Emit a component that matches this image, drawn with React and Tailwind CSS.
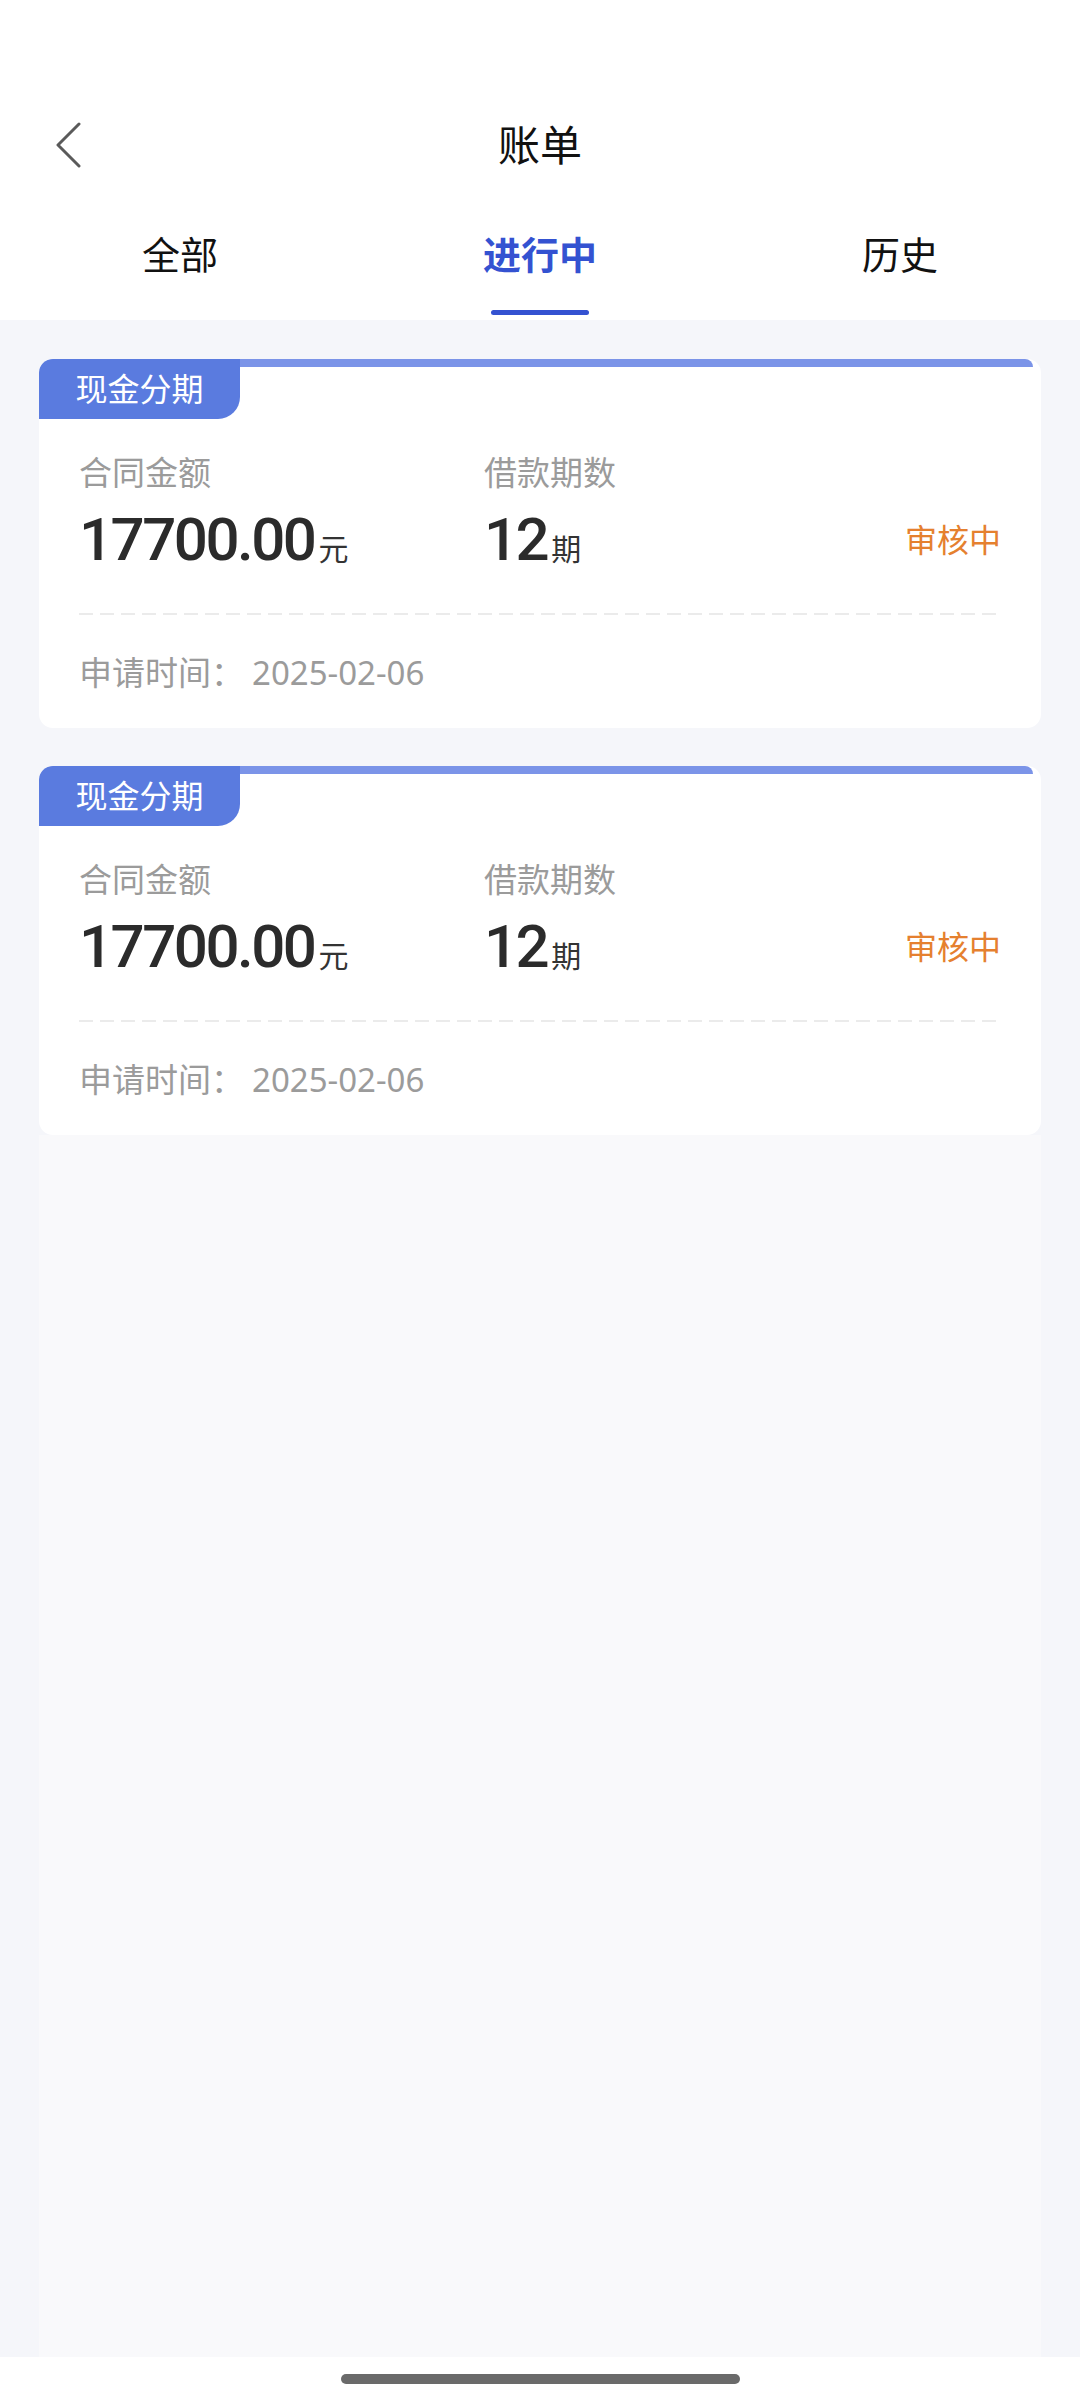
import React from 'react';

const cjk = { fontFamily: '"Noto Sans", "Noto Sans CJK SC", sans-serif' };
const num = { fontFamily: 'Roboto, "Noto Sans CJK SC", sans-serif' };

const bills = [
    { type: '现金分期', amount: '17700.00', term: '12', status: '审核中', date: '2025-02-06' },
    { type: '现金分期', amount: '17700.00', term: '12', status: '审核中', date: '2025-02-06' },
];

function BillCard({ bill }) {
    return (
        <div className="flex flex-col bg-white rounded-[14px] overflow-hidden">
            <div className="flex items-start h-[60px]">
                <div className="flex items-center justify-center w-[201px] h-[60px] bg-[#5a7bdf] rounded-tl-[12px] rounded-br-[22px] text-white text-[32px] leading-none">
                    {bill.type}
                </div>
                <div className="flex-1 h-[8px] mr-[8px] bg-[#7b94e8] rounded-tr-[10px]" />
            </div>
            <div className="px-[40px] pt-[32px] pb-[33px]">
                <div className="flex">
                    <div className="w-[405px] flex flex-col">
                        <span className="text-[33px] leading-[44px] text-[#9b9b9b]">合同金额</span>
                        <div className="flex items-baseline mt-[13px] h-[64px]">
                            <span style={num} className="text-[60px] leading-[64px] font-medium text-[#2b2b2b] tracking-[-2.5px]">
                                {bill.amount}
                            </span>
                            <span className="text-[30px] text-[#333] ml-[4px]">元</span>
                        </div>
                    </div>
                    <div className="flex-1 flex flex-col">
                        <span className="text-[33px] leading-[44px] text-[#9b9b9b]">借款期数</span>
                        <div className="flex items-center justify-between mt-[13px] h-[64px]">
                            <div className="flex items-baseline">
                                <span style={num} className="text-[60px] leading-[64px] font-medium text-[#2b2b2b] tracking-[-2.5px]">
                                    {bill.term}
                                </span>
                                <span className="text-[30px] text-[#333] ml-[4px]">期</span>
                            </div>
                            <span className="text-[32px] text-[#e5802f]">{bill.status}</span>
                        </div>
                    </div>
                </div>
                <div className="mt-[41px] h-[2px] bg-[repeating-linear-gradient(to_right,#ebebeb_0_14px,transparent_14px_21px)]" />
                <div className="flex items-center mt-[36px] h-[44px] text-[33px] text-[#9b9b9b]">
                    <span>申请时间：</span>
                    <span className="ml-[8px]">{bill.date}</span>
                </div>
            </div>
        </div>
    );
}

export default function App() {
    const tabs = ['全部', '进行中', '历史'];
    const active = 1;

    return (
        <div style={cjk} className="w-[1080px] h-[2400px] flex flex-col bg-white">
            <div className="h-[100px]" />
            <div className="grid grid-cols-[1fr_auto_1fr] items-center h-[90px]">
                <div className="pl-[55px]">
                    <svg width="27" height="46" viewBox="0 0 27 46" fill="none">
                        <path d="M24 2 L3 23 L24 44" stroke="#5a5a5a" strokeWidth="3" strokeLinecap="round" strokeLinejoin="round" />
                    </svg>
                </div>
                <h1 className="text-[42px] leading-none text-[#111]">账单</h1>
                <div />
            </div>
            <div className="grid grid-cols-3 h-[130px]">
                {tabs.map((t, i) => (
                    <div key={t} className="flex flex-col items-center pt-[42px]">
                        <span
                            className={
                                i === active
                                    ? 'text-[38px] leading-[44px] font-semibold text-[#3452d1]'
                                    : 'text-[38px] leading-[44px] text-[#111]'
                            }
                        >
                            {t}
                        </span>
                        {i === active && <div className="mt-[34px] w-[98px] h-[5px] rounded-full bg-[#3452d1]" />}
                    </div>
                ))}
            </div>
            <div className="flex-1 flex flex-col px-[39px] pt-[39px] bg-[#f5f6fa]">
                <div className="flex flex-col gap-[38px]">
                    {bills.map((b, i) => (
                        <BillCard key={i} bill={b} />
                    ))}
                </div>
                <div className="flex-1 bg-[#f9f9fb]" />
            </div>
            <div className="h-[43px] flex items-start justify-center bg-white pt-[17px]">
                <div className="w-[399px] h-[10px] rounded-full bg-[#6a6a6a]" />
            </div>
        </div>
    );
}
